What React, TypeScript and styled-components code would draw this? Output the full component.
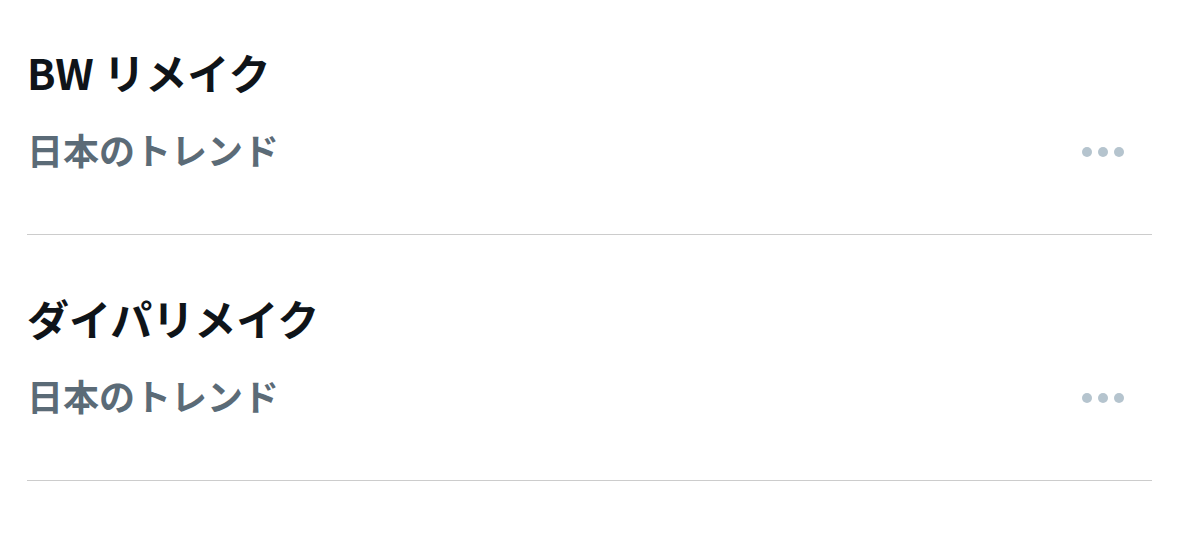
import styled, { createGlobalStyle } from "styled-components";

const GlobalStyle = createGlobalStyle`
  body {
    margin: 0;
    background: #ffffff;
    font-family: "Noto Sans CJK JP", "Noto Sans", sans-serif;
  }
`;

const List = styled.div`
  padding: 0 27px;
`;

const Item = styled.div`
  padding: 58px 0 63px 0;
  border-bottom: 1px solid #cccccc;

  &:first-child {
    padding-top: 47px;
  }
`;

const Title = styled.div`
  font-size: 42px;
  font-weight: 700;
  line-height: 50px;
  color: #0f1419;
`;

const MetaRow = styled.div`
  margin-top: 31px;
  display: flex;
  align-items: center;
  justify-content: space-between;
`;

const Meta = styled.div`
  font-size: 36px;
  font-weight: 700;
  line-height: 43px;
  color: #5b6b77;
`;

const MoreButton = styled.button`
  border: none;
  background: none;
  padding: 0;
  margin: 4px 27px 0 0;
  width: 44px;
  height: 12px;
  display: flex;
  align-items: center;
  cursor: pointer;
`;

const trends = [
  { title: "BW リメイク", meta: "日本のトレンド" },
  { title: "ダイパリメイク", meta: "日本のトレンド" },
];

const MoreIcon = () => (
  <svg width="44" height="12" viewBox="0 0 44 12">
    <circle cx="6" cy="6" r="5" fill="#b5c4ce" />
    <circle cx="22" cy="6" r="5" fill="#b5c4ce" />
    <circle cx="38" cy="6" r="5" fill="#b5c4ce" />
  </svg>
);

const App = () => {
  return (
    <>
      <GlobalStyle />
      <List>
        {trends.map((t) => (
          <Item key={t.title}>
            <Title>{t.title}</Title>
            <MetaRow>
              <Meta>{t.meta}</Meta>
              <MoreButton aria-label="more">
                <MoreIcon />
              </MoreButton>
            </MetaRow>
          </Item>
        ))}
      </List>
    </>
  );
};

export default App;
